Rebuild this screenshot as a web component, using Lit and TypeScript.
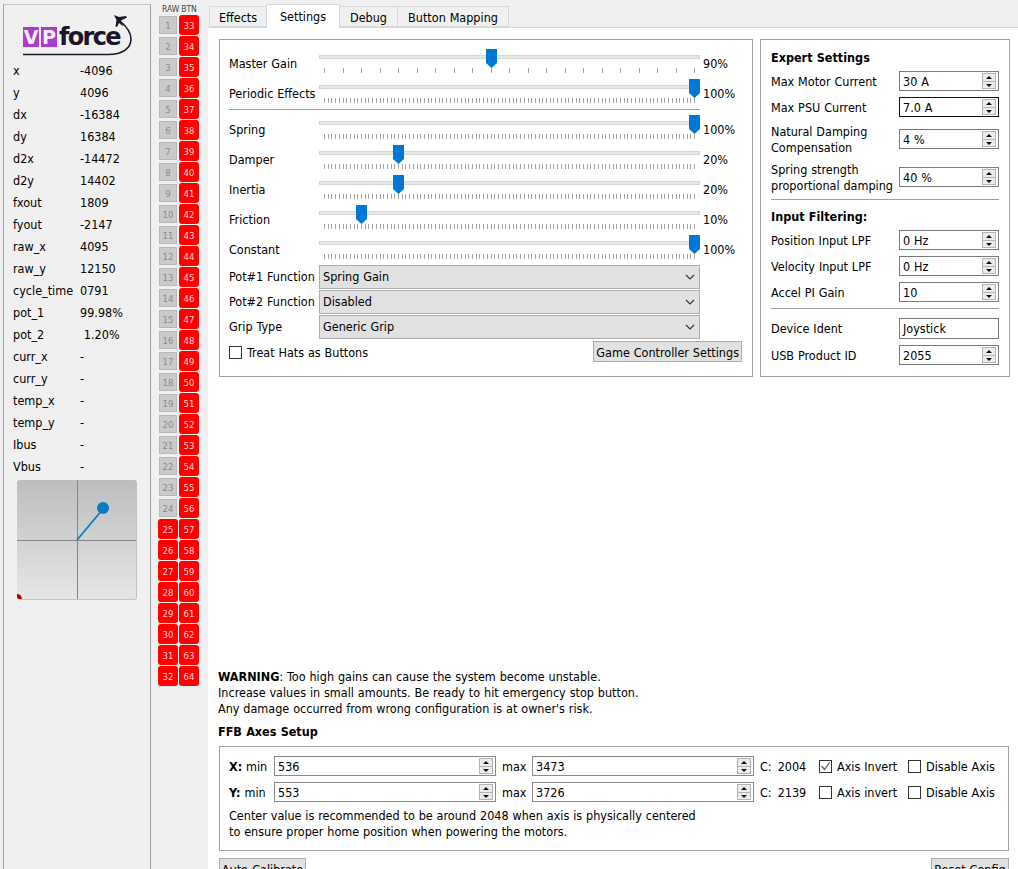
import {LitElement, html, css, svg} from 'lit';
import {customElement} from 'lit/decorators.js';

const TELEMETRY: [string, string][] = [
  ['x', '-4096'], ['y', '4096'], ['dx', '-16384'], ['dy', '16384'],
  ['d2x', '-14472'], ['d2y', '14402'], ['fxout', '1809'], ['fyout', '-2147'],
  ['raw_x', '4095'], ['raw_y', '12150'], ['cycle_time', '0791'],
  ['pot_1', '99.98%'], ['pot_2', ' 1.20%'], ['curr_x', '-'], ['curr_y', '-'],
  ['temp_x', '-'], ['temp_y', '-'], ['Ibus', '-'], ['Vbus', '-'],
];

interface Slider {
  label: string;
  value: number;
  pos: number;
  ticks: number;
}

const SLIDERS_TOP: Slider[] = [
  {label: 'Master Gain', value: 90, pos: 0.45, ticks: 20},
  {label: 'Periodic Effects', value: 100, pos: 1, ticks: 100},
];

const SLIDERS_BOTTOM: Slider[] = [
  {label: 'Spring', value: 100, pos: 1, ticks: 100},
  {label: 'Damper', value: 20, pos: 0.2, ticks: 100},
  {label: 'Inertia', value: 20, pos: 0.2, ticks: 100},
  {label: 'Friction', value: 10, pos: 0.1, ticks: 100},
  {label: 'Constant', value: 100, pos: 1, ticks: 100},
];

const spin = (value: string, focused = false) => html`
  <div class="spin ${focused ? 'focused' : ''}">
    <span>${value}</span>
    <div class="spin-btns">
      <i class="up"></i>
      <i class="down"></i>
    </div>
  </div>
`;

const check = (label: string, checked = false) => html`
  <label class="check">
    <span class="box">
      ${checked
        ? html`<svg width="11" height="11" viewBox="0 0 11 11"><path d="M1.5 5 L4.5 8.5 L9.5 1.5" fill="none" stroke="#555" stroke-width="1.2"/></svg>`
        : ''}
    </span>
    ${label}
  </label>
`;

@customElement('app-root')
export class AppRoot extends LitElement {
  static styles = css`
    :host {
      display: grid;
      grid-template-columns: 152px 56px 1fr;
      height: 869px;
      overflow: hidden;
      background: #f0f0f0;
      font-family: 'DejaVu Sans Condensed', 'DejaVu Sans', sans-serif;
      font-stretch: condensed;
      font-size: 12.5px;
      word-spacing: 0.3px;
      color: #000;
    }

    .side {
      margin: 4px 1px 0 3px;
      border: 1px solid #a0a0a0;
      border-top-color: #c8c8c8;
      border-bottom: 0;
      padding: 0 0 0 9px;
    }

    .logo {
      display: flex;
      position: relative;
      height: 55px;
      margin-left: 10px;
      padding-top: 22px;
      box-sizing: border-box;
      align-items: flex-start;
      color: #1d1429;
      font-family: 'DejaVu Sans', sans-serif;
      font-stretch: normal;
      font-weight: bold;
    }

    .logo b {
      background: #ab3ccf;
      color: #f0f0f0;
      width: 16px;
      height: 20px;
      line-height: 20px;
      font-size: 19px;
      margin-right: 2px;
      text-align: center;
      overflow: hidden;
    }

    .logo span {
      line-height: 20px;
      height: 20px;
      font-size: 24px;
      letter-spacing: -1.7px;
    }

    .logo svg {
      position: absolute;
      left: 0;
      top: 0;
    }

    .row {
      display: grid;
      grid-template-columns: 67px 1fr;
      height: 22px;
      line-height: 21px;
      white-space: pre;
    }

    .joy {
      position: relative;
      width: 120px;
      height: 120px;
      margin: 2px 0 0 4px;
      border-radius: 3px;
      overflow: hidden;
      background: linear-gradient(#bcbdbe, #e6e6e6);
      border-right: 1px solid #c4c4c4;
      border-bottom: 1px solid #c4c4c4;
      box-sizing: border-box;
    }

    .joy svg {
      display: block;
    }

    .buttons {
      padding-top: 4px;
      display: grid;
      grid-template-columns: 20px 20px;
      grid-template-rows: 10px;
      grid-auto-rows: 20px;
      column-gap: 1px;
      row-gap: 1px;
      margin-left: 6px;
      align-content: start;
    }

    .head {
      height: 10px;
      line-height: 10px;
      text-align: center;
      color: #444;
      font-size: 8.5px;
    }

    .head:first-child {
      padding-left: 4px;
    }

    .btn {
      display: flex;
      align-items: center;
      justify-content: center;
      font-size: 9.5px;
      box-sizing: border-box;
    }

    .btn.on {
      background: #ff0000;
      color: #ffd8d8;
      border-radius: 3px;
    }

    .btn.off {
      margin: 1px 0 1px 1px;
      width: 18px;
      height: 18px;
      background: #cacaca;
      border: 1px solid #b8b8b8;
      color: #8a8a8a;
    }

    .main {
      display: flex;
      flex-direction: column;
      min-width: 0;
    }

    .tabs {
      display: flex;
      height: 28px;
      align-items: flex-end;
      padding-left: 1px;
      position: relative;
      z-index: 1;
      margin-bottom: -1px;
    }

    .tab {
      height: 21px;
      line-height: 22px;
      box-sizing: border-box;
      border: 1px solid #d9d9d9;
      border-left-width: 0;
      background: #f0f0f0;
      margin-bottom: 1px;
      text-align: center;
    }

    .tab:nth-child(1) {
      width: 58px;
      border-left-width: 1px;
    }

    .tab:nth-child(2) {
      width: 74px;
    }

    .tab:nth-child(3) {
      width: 58px;
    }

    .tab:nth-child(4) {
      width: 111px;
    }

    .tab.active {
      height: 24px;
      line-height: 23px;
      background: #fff;
      border-bottom: 0;
      margin: 0 0 0 -1px;
      border-left-width: 1px;
    }

    .pane {
      background: #fff;
      border-top: 1px solid #d9d9d9;
      padding: 11px 8px 0 11px;
      flex: 1;
    }

    .top {
      display: flex;
      gap: 7px;
      height: 338px;
    }

    .group {
      border: 1px solid #a0a0a0;
      box-sizing: border-box;
    }

    .gains {
      width: 535px;
      padding: 9px 10px 0 9px;
    }

    .slider-row {
      display: grid;
      grid-template-columns: 90px 381px auto;
      height: 30px;
    }

    .slider-row .name {
      line-height: 29px;
      white-space: nowrap;
    }

    .slider-row .pct {
      padding-left: 3px;
      line-height: 30px;
    }

    .track {
      position: relative;
      height: 30px;
    }

    .groove {
      position: absolute;
      left: 0;
      right: 0;
      top: 6px;
      height: 4px;
      box-sizing: border-box;
      background: #e7e9e7;
      border: 1px solid #d6d6d6;
    }

    .track svg.ticks {
      position: absolute;
      left: 0;
      top: 19px;
    }

    .thumb {
      position: absolute;
      top: 0;
    }

    hr {
      border: 0;
      border-top: 1px solid #a0a0a0;
      margin: 0;
    }

    .gains hr {
      margin: 0 0 5px;
      width: 471px;
    }

    .select-row {
      display: grid;
      grid-template-columns: 90px 381px;
      height: 22px;
      margin-bottom: 3px;
      line-height: 24px;
      white-space: nowrap;
    }

    .select {
      display: flex;
      align-items: center;
      justify-content: space-between;
      line-height: 22px;
      background: #e1e1e1;
      border: 1px solid #adadad;
      box-sizing: border-box;
      padding: 0 4px 0 3px;
    }

    .gains-foot {
      display: flex;
      justify-content: space-between;
      align-items: center;
      margin-top: 2px;
      height: 22px;
      line-height: 16px;
    }

    .gains-foot .check {
      padding-top: 3px;
    }

    .check {
      display: inline-flex;
      align-items: center;
      gap: 5px;
      white-space: nowrap;
    }

    .box {
      width: 13px;
      height: 13px;
      box-sizing: border-box;
      border: 1px solid #333;
      background: #fff;
      display: inline-block;
      line-height: 0;
    }

    .push {
      background: #e1e1e1;
      border: 1px solid #adadad;
      height: 21px;
      line-height: 21px;
      box-sizing: border-box;
      padding: 0 2px;
      white-space: nowrap;
      text-align: center;
    }

    .expert {
      width: 250px;
      padding: 9px 10px 0 10px;
      display: flex;
      flex-direction: column;
    }

    .title {
      font-weight: bold;
      line-height: 16px;
      padding-top: 1px;
      margin-bottom: -1px;
    }

    .form {
      display: grid;
      grid-template-columns: 128px 100px;
      row-gap: 6px;
      align-items: center;
      margin-top: 6px;
      line-height: 16px;
      white-space: nowrap;
    }

    .form > div:not(.spin) {
      margin: 1px 0 -1px;
    }

    .form > div.ident {
      margin: 0;
    }

    .expert hr {
      margin-top: 6px;
    }

    .spin {
      display: flex;
      align-items: center;
      justify-content: space-between;
      height: 20px;
      box-sizing: border-box;
      border: 1px solid #7a7a7a;
      background: #fff;
      padding: 0 2px 0 3px;
    }

    .form .spin span {
      margin: 1px 0 -1px;
    }

    .spin.focused {
      border-color: #111;
    }

    .spin.plain {
      height: 21px;
    }

    .spin-btns {
      display: flex;
      flex-direction: column;
      width: 14px;
      height: 16px;
      gap: 0;
    }

    .spin-btns i {
      flex: 1;
      position: relative;
      background: #ececec;
      border: 1px solid #b4b4b4;
      box-sizing: border-box;
    }

    .spin-btns i.up {
      border-bottom-width: 0;
    }

    .spin-btns i::after {
      content: '';
      position: absolute;
      left: 3px;
      top: 2px;
      border: 3px solid transparent;
      border-top-width: 0;
      border-bottom: 3px solid #111;
    }

    .spin-btns i.down::after {
      border-bottom-width: 0;
      border-top: 3px solid #111;
      top: 2px;
    }

    .warning {
      margin: 292px 0 0 -1px;
      line-height: 16px;
    }

    .ffb-title {
      font-weight: bold;
      line-height: 16px;
      margin: 7px 0 6px -1px;
    }

    .axes {
      height: 105px;
      width: 790px;
      padding: 9px 0 0 9px;
    }

    .axis {
      display: grid;
      grid-template-columns: 45px 222px 36px 222px 65px 89px 1fr;
      height: 20px;
      align-items: center;
      margin-bottom: 6px;
      white-space: nowrap;
    }

    .axis .mx {
      padding-left: 6px;
    }

    .axis .c {
      display: flex;
      gap: 6px;
      padding-left: 6px;
    }

    .axis .spin {
      border-color: #8a8a8a;
    }

    .note {
      line-height: 16px;
    }

    .foot {
      display: flex;
      justify-content: space-between;
      margin: 7px 1px 0 0;
    }

    .foot .push {
      height: 24px;
      line-height: 21px;
      padding: 0;
      width: 87px;
    }

    .foot .push + .push {
      width: 78px;
    }
  `;

  private ticks(count: number) {
    const lines = [];
    for (let i = 0; i <= count; i++) {
      const x = Math.round((i * 370) / count) + 5;
      lines.push(svg`<line x1=${x + 0.5} x2=${x + 0.5} y1="0" y2="5"></line>`);
    }
    return html`<svg class="ticks" width="381" height="5" stroke="#a8a69c">${lines}</svg>`;
  }

  private slider(s: Slider) {
    return html`
      <div class="slider-row">
        <div class="name">${s.label}</div>
        <div class="track">
          <div class="groove"></div>
          ${this.ticks(s.ticks)}
          <svg class="thumb" style="left:${Math.floor(0.5 + s.pos * 370)}px" width="11" height="19" viewBox="0 0 11 19">
            <path d="M0 0 H11 V14 L5.5 19 L0 14 Z" fill="#0078d7"/>
          </svg>
        </div>
        <div class="pct">${s.value}%</div>
      </div>
    `;
  }

  private selectRow(label: string, value: string) {
    return html`
      <div class="select-row">
        <div>${label}</div>
        <div class="select">
          ${value}
          <svg width="10" height="6" viewBox="0 0 10 6"><path d="M1 1 L5 5 L9 1" fill="none" stroke="#333" stroke-width="1.1"/></svg>
        </div>
      </div>
    `;
  }

  private buttons() {
    const cells = [];
    for (let i = 1; i <= 32; i++) {
      cells.push(html`<div class="btn ${i <= 24 ? 'off' : 'on'}">${i}</div>`);
      cells.push(html`<div class="btn on">${i + 32}</div>`);
    }
    return cells;
  }

  render() {
    return html`
      <aside class="side">
        <div class="logo">
          <b>V</b><b>P</b><span>force</span>
          <svg width="120" height="55" viewBox="0 0 120 55" fill="none">
            <path d="M0 49.500 H85 C100 49.500 108 43 108 34 C108 27 103 21 97 16" stroke="#1d1429" stroke-width="1.600"/>
            <path d="M91 10 L96 12 L103 11 L104 12.500 L98 15.500 L99 19 L101 21 L99 20.500 L96 18 L94 22 L92.500 21.500 L93.500 15 Z" fill="#1d1429"/>
          </svg>
        </div>
        ${TELEMETRY.map(([k, v]) => html`<div class="row"><span>${k}</span><span>${v}</span></div>`)}
        <div class="joy">
          <svg width="120" height="120" viewBox="0 0 120 120">
            <line x1="60.500" x2="60.500" y1="0" y2="120" stroke="#858585"/>
            <line x1="0" x2="120" y1="60.500" y2="60.500" stroke="#858585"/>
            <line x1="60" y1="60" x2="86" y2="29" stroke="#0a7cc4" stroke-width="1.800"/>
            <circle cx="86" cy="28" r="6" fill="#0a7cc4"/>
            <circle cx="0" cy="119" r="5" fill="#c00000"/>
          </svg>
        </div>
      </aside>

      <div class="buttons">
        <div class="head">RAW</div>
        <div class="head">BTN</div>
        ${this.buttons()}
      </div>

      <div class="main">
        <div class="tabs">
          <div class="tab">Effects</div>
          <div class="tab active">Settings</div>
          <div class="tab">Debug</div>
          <div class="tab">Button Mapping</div>
        </div>
        <div class="pane">
          <div class="top">
            <section class="group gains">
              ${SLIDERS_TOP.map(s => this.slider(s))}
              <hr />
              ${SLIDERS_BOTTOM.map(s => this.slider(s))}
              ${this.selectRow('Pot#1 Function', 'Spring Gain')}
              ${this.selectRow('Pot#2 Function', 'Disabled')}
              ${this.selectRow('Grip Type', 'Generic Grip')}
              <div class="gains-foot">
                ${check('Treat Hats as Buttons')}
                <div class="push">Game Controller Settings</div>
              </div>
            </section>

            <section class="group expert">
              <div class="title">Expert Settings</div>
              <div class="form">
                <div>Max Motor Current</div>${spin('30 A')}
                <div>Max PSU Current</div>${spin('7.0 A', true)}
                <div>Natural Damping<br />Compensation</div>${spin('4 %')}
                <div>Spring strength<br />proportional damping</div>${spin('40 %')}
              </div>
              <hr />
              <div class="title" style="margin-top:8px">Input Filtering:</div>
              <div class="form">
                <div>Position Input LPF</div>${spin('0 Hz')}
                <div>Velocity Input LPF</div>${spin('0 Hz')}
                <div>Accel PI Gain</div>${spin('10')}
              </div>
              <hr />
              <div class="form" style="margin-top:9px">
                <div class="ident">Device Ident</div><div class="spin plain ident">Joystick</div>
                <div>USB Product ID</div>${spin('2055')}
              </div>
            </section>
          </div>

          <div class="warning">
            <b>WARNING</b>: Too high gains can cause the system become unstable.<br />
            Increase values in small amounts. Be ready to hit emergency stop button.<br />
            Any damage occurred from wrong configuration is at owner's risk.
          </div>
          <div class="ffb-title">FFB Axes Setup</div>
          <section class="group axes">
            <div class="axis">
              <div><b>X:</b> min</div>${spin('536')}
              <div class="mx">max</div>${spin('3473')}
              <div class="c"><span>C:</span><span>2004</span></div>
              ${check('Axis Invert', true)}
              ${check('Disable Axis')}
            </div>
            <div class="axis">
              <div><b>Y:</b> min</div>${spin('553')}
              <div class="mx">max</div>${spin('3726')}
              <div class="c"><span>C:</span><span>2139</span></div>
              ${check('Axis invert')}
              ${check('Disable Axis')}
            </div>
            <div class="note">
              Center value is recommended to be around 2048 when axis is physically centered<br />
              to ensure proper home position when powering the motors.
            </div>
          </section>
          <div class="foot">
            <div class="push">Auto-Calibrate</div>
            <div class="push">Reset Config</div>
          </div>
        </div>
      </div>
    `;
  }
}
